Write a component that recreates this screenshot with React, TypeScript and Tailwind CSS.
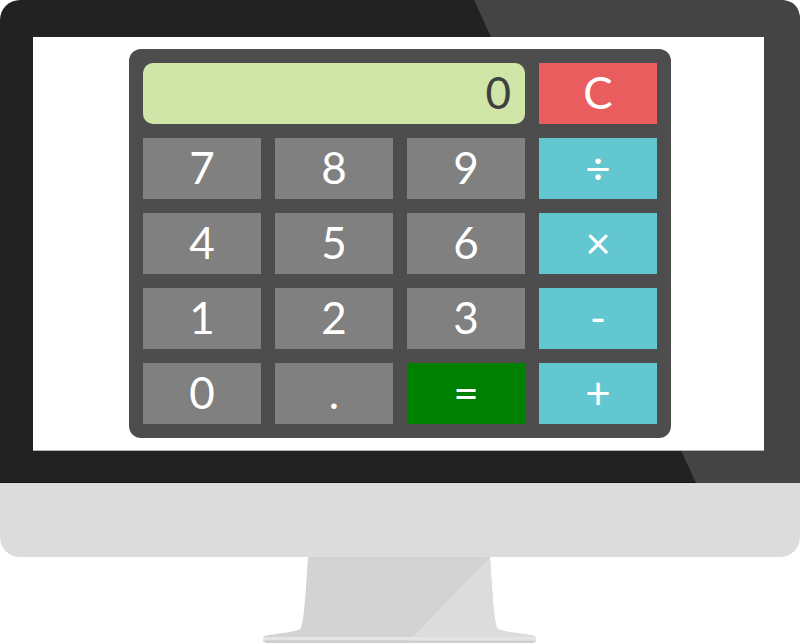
import React from "react";

const keys: { label: string; kind: "num" | "op" | "eq" }[] = [
  { label: "7", kind: "num" },
  { label: "8", kind: "num" },
  { label: "9", kind: "num" },
  { label: "÷", kind: "op" },
  { label: "4", kind: "num" },
  { label: "5", kind: "num" },
  { label: "6", kind: "num" },
  { label: "×", kind: "op" },
  { label: "1", kind: "num" },
  { label: "2", kind: "num" },
  { label: "3", kind: "num" },
  { label: "-", kind: "op" },
  { label: "0", kind: "num" },
  { label: ".", kind: "num" },
  { label: "=", kind: "eq" },
  { label: "+", kind: "op" },
];

function Key({ label, kind }: { label: string; kind: "num" | "op" | "eq" }) {
  const bg =
    kind === "num" ? "bg-[#808080]" : kind === "op" ? "bg-[#63c7d1]" : "bg-[#008000]";
  return (
    <div
      className={`${bg} h-[61px] flex items-center justify-center text-white text-[44px] leading-none`}
    >
      <span className="-mt-[4px]">{label}</span>
    </div>
  );
}

export default function App() {
  return (
    <div
      className="w-[800px] h-[644px] bg-white overflow-hidden flex flex-col"
      style={{ fontFamily: "Lato, 'Open Sans', sans-serif" }}
    >
      {/* Bezel */}
      <div className="relative h-[483px] rounded-t-[20px] bg-[#222222] pt-[37px] pl-[33px] pr-[36px] border-b border-[#151515]">
        <svg
          className="absolute inset-0 pointer-events-none"
          width="800"
          height="483"
          viewBox="0 0 800 483"
        >
          <path d="M474 0 H780 Q800 0 800 20 V483 H696 Z" fill="#444444" />
        </svg>
        <div className="relative h-[414px] bg-white border-b border-[#b5b5b5] pt-[12px] pl-[96px]">
          {/* Calculator */}
          <div className="w-[542px] bg-[#4d4d4d] rounded-[12px] p-[14px] flex flex-col gap-[14px]">
            <div className="grid grid-cols-4 gap-[14px]">
              <div className="col-span-3 h-[61px] bg-[#d0e6a9] rounded-[10px] flex items-center justify-end pr-[14px] text-[#404040] text-[44px] leading-none">
                <span className="-mt-[4px]">0</span>
              </div>
              <div className="h-[61px] bg-[#e95d5f] flex items-center justify-center text-white text-[44px] leading-none">
                <span className="-mt-[4px]">C</span>
              </div>
            </div>
            <div className="grid grid-cols-4 gap-[14px]">
              {keys.map((k) => (
                <Key key={k.label} label={k.label} kind={k.kind} />
              ))}
            </div>
          </div>
        </div>
      </div>
      {/* Chin */}
      <div className="h-[74px] bg-[#dcdcdc] rounded-b-[20px] shrink-0" />
      {/* Stand */}
      <svg width="800" height="87" viewBox="0 557 800 87" className="block shrink-0">
        <path
          d="M308 557 H490 C492 590 494 620 497 628 C500 632 520 633 535 636 L536 642 H263 L264 636 C280 633 298 632 301 628 C304 620 306 590 308 557 Z"
          fill="#d3d3d3"
        />
        <path
          d="M490 557 C492 590 494 620 497 628 C500 632 520 633 535 636 L536 642 H408 Z"
          fill="#dcdcdc"
        />
        <path d="M263 637 H536 V640 H263 Z" fill="#e4e4e4" />
        <path d="M265 641 H534 V643 H265 Z" fill="#cfcfcf" />
      </svg>
    </div>
  );
}
